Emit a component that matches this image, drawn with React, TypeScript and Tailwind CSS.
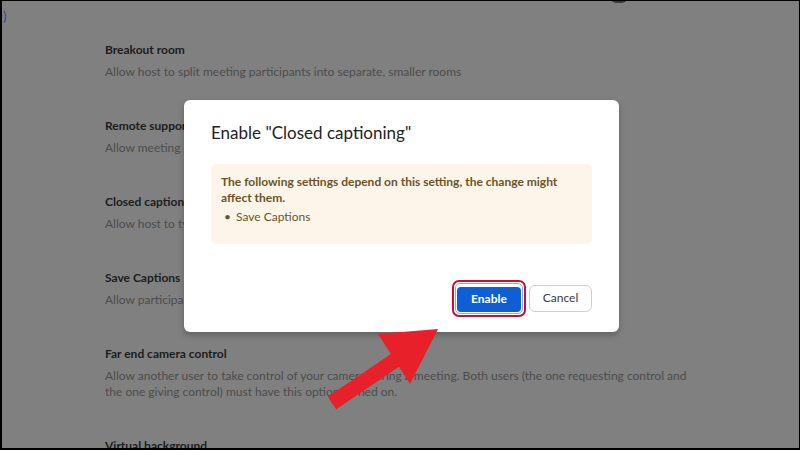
import React from 'react';

const settings = [
  { title: 'Breakout room', desc: 'Allow host to split meeting participants into separate, smaller rooms' },
  { title: 'Remote support', desc: 'Allow meeting host to provide 1:1 remote support' },
  { title: 'Closed captioning', desc: 'Allow host to type closed captions' },
  { title: 'Save Captions', desc: 'Allow participants to save captions' },
  {
    title: 'Far end camera control',
    desc: 'Allow another user to take control of your camera during a meeting. Both users (the one requesting control and the one giving control) must have this option turned on.',
  },
  { title: 'Virtual background', desc: 'Customize your background to keep your environment private from others in a meeting.' },
];

const Arrow = () => (
  <svg className="absolute left-0 top-0 pointer-events-none" width="800" height="450" viewBox="0 0 800 450">
    <line x1="330" y1="402" x2="395" y2="358" stroke="#e8202a" strokeWidth="15" />
    <polygon points="376,333 436,328 408,383" fill="#e8202a" />
  </svg>
);

export default function App() {
  return (
    <div
      className="relative w-[800px] h-[450px] overflow-hidden bg-[#808080] border-t border-l-2 border-b-2 border-r border-black"
      style={{ fontFamily: 'Lato, "Open Sans", sans-serif' }}
    >
      {/* stray bits of the page underneath */}
      <span className="absolute left-[1px] top-[6px] text-[13px] text-[#2a4d86]">)</span>
      <div className="absolute left-[609px] top-[-8px] w-[16px] h-[10px] rounded-full bg-[#3a3a3a]" />

      <div className="flex flex-col gap-[38px] pl-[103px] pt-[41px]">
        {settings.map((s) => (
          <div key={s.title} className="flex flex-col gap-[6px] w-[591px]">
            <div className="text-[12px] leading-[16px] font-bold text-[#1c1c1c]">{s.title}</div>
            <div className="text-[12px] leading-[16px] text-[#4c4c4c]">{s.desc}</div>
          </div>
        ))}
      </div>

      {/* dialog */}
      <div className="absolute left-[182px] top-[99px] w-[435px] h-[232px] bg-white rounded-[6px] shadow-[0_3px_6px_rgba(0,0,0,0.25)] px-[27px] pt-[21px] flex flex-col">
        <div className="text-[17px] leading-[24px] text-[#232323]">Enable "Closed captioning"</div>
        <div className="mt-[19px] bg-[#fdf4ea] rounded-[5px] px-[10px] pt-[10px] pb-[19px] text-[12px] leading-[16px] text-[#6b5526]">
          <div className="font-bold pr-[20px]">The following settings depend on this setting, the change might affect them.</div>
          <div className="mt-[3px] pl-[3px] flex gap-[5px]">
            <span>•</span>
            <span>Save Captions</span>
          </div>
        </div>
        <div className="mt-[36px] flex justify-end items-center gap-[3px]">
          <div className="rounded-[7px] border-2 border-[#c8102e] p-[1px]">
            <div className="rounded-[5px] border border-[#7fb0f0] p-[1px] bg-white">
              <button className="h-[25px] w-[64px] rounded-[4px] bg-[#0e5fd6] text-white text-[12px] font-bold">Enable</button>
            </div>
          </div>
          <button className="h-[27px] w-[63px] rounded-[6px] border border-[#cfcfcf] bg-white text-[#3a3a3a] text-[12px]">Cancel</button>
        </div>
      </div>

      <Arrow />
    </div>
  );
}
